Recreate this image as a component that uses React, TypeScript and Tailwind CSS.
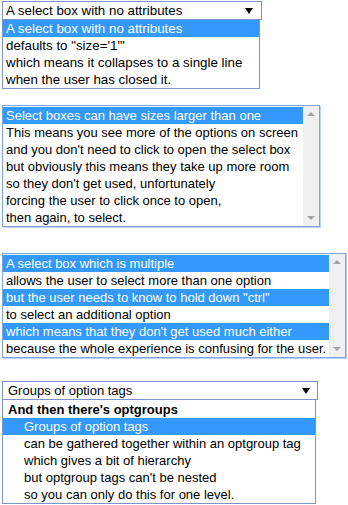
import React from "react";

const Row = ({ children, sel = false, bold = false, indent = false }: { children: React.ReactNode; sel?: boolean; bold?: boolean; indent?: boolean }) => (
  <div
    className={
      "h-[17px] leading-[17px] whitespace-nowrap " +
      (indent ? "pl-[21px] " : "pl-[3px] ") +
      (bold ? "font-bold " : "") +
      (sel ? "bg-[#3399ff] text-white" : "text-black")
    }
  >
    {children}
  </div>
);

const Arrow = () => (
  <svg width="8" height="6" viewBox="0 0 8 6" className="shrink-0">
    <path d="M0 0H8L4 6Z" fill="#000" />
  </svg>
);

const ScrollBar = () => (
  <div className="w-[16px] bg-[#f0f0f0] flex flex-col justify-between items-center py-[6px] shrink-0">
    <svg width="8" height="4" viewBox="0 0 8 4">
      <path d="M0 4L4 0L8 4Z" fill="#a3a3a3" />
    </svg>
    <svg width="8" height="4" viewBox="0 0 8 4">
      <path d="M0 0H8L4 4Z" fill="#a3a3a3" />
    </svg>
  </div>
);

export default function App() {
  return (
    <div className="w-[348px] h-[505px] bg-white font-['Liberation_Sans',Arial,sans-serif] text-[13px] text-black pl-[2px] pt-[1px] flex flex-col items-start">
      {/* Section 1 */}
      <div className="flex flex-col text-[13.333px]">
        <div className="w-[260px] h-[19px] border border-[#7b95c8] flex items-center justify-between pl-[3px] pr-[8px] whitespace-nowrap">
          <span>A select box with no attributes</span>
          <Arrow />
        </div>
        <div className="w-[258px] border border-t-0 border-[#7b95c8]">
          <Row sel>A select box with no attributes</Row>
          <Row>defaults to "size='1'"</Row>
          <Row>which means it collapses to a single line</Row>
          <Row>when the user has closed it.</Row>
        </div>
      </div>

      {/* Section 2 */}
      <div className="mt-[16px] w-[318px] h-[122px] border border-[#7fa2e0] shadow-[1px_1px_0_#bcd0f4] flex">
        <div className="flex-1 pt-[1px] overflow-hidden">
          <Row sel>Select boxes can have sizes larger than one</Row>
          <Row>This means you see more of the options on screen</Row>
          <Row>and you don't need to click to open the select box</Row>
          <Row>but obviously this means they take up more room</Row>
          <Row>so they don't get used, unfortunately</Row>
          <Row>forcing the user to click once to open,</Row>
          <Row>then again, to select.</Row>
        </div>
        <ScrollBar />
      </div>

      {/* Section 3 */}
      <div className="mt-[26px] w-[344px] h-[105px] border border-[#7fa2e0] shadow-[1px_1px_0_#bcd0f4] flex">
        <div className="flex-1 pt-[1px] overflow-hidden">
          <Row sel>A select box which is multiple</Row>
          <Row>allows the user to select more than one option</Row>
          <Row sel>but the user needs to know to hold down "ctrl"</Row>
          <Row>to select an additional option</Row>
          <Row sel>which means that they don't get used much either</Row>
          <Row>because the whole experience is confusing for the user.</Row>
        </div>
        <ScrollBar />
      </div>

      {/* Section 4 */}
      <div className="mt-[23px] flex flex-col">
        <div className="w-[316px] h-[19px] border border-[#7b95c8] flex items-center justify-between pl-[5px] pr-[7px] whitespace-nowrap">
          <span>Groups of option tags</span>
          <Arrow />
        </div>
        <div className="w-[314px] border border-t-0 border-[#7b95c8] pt-[1px]">
          <div className="h-[17px] leading-[17px] pl-[5px] font-bold whitespace-nowrap">And then there's optgroups</div>
          <Row sel indent>Groups of option tags</Row>
          <Row indent>can be gathered together within an optgroup tag</Row>
          <Row indent>which gives a bit of hierarchy</Row>
          <Row indent>but optgroup tags can't be nested</Row>
          <Row indent>so you can only do this for one level.</Row>
        </div>
      </div>
    </div>
  );
}
